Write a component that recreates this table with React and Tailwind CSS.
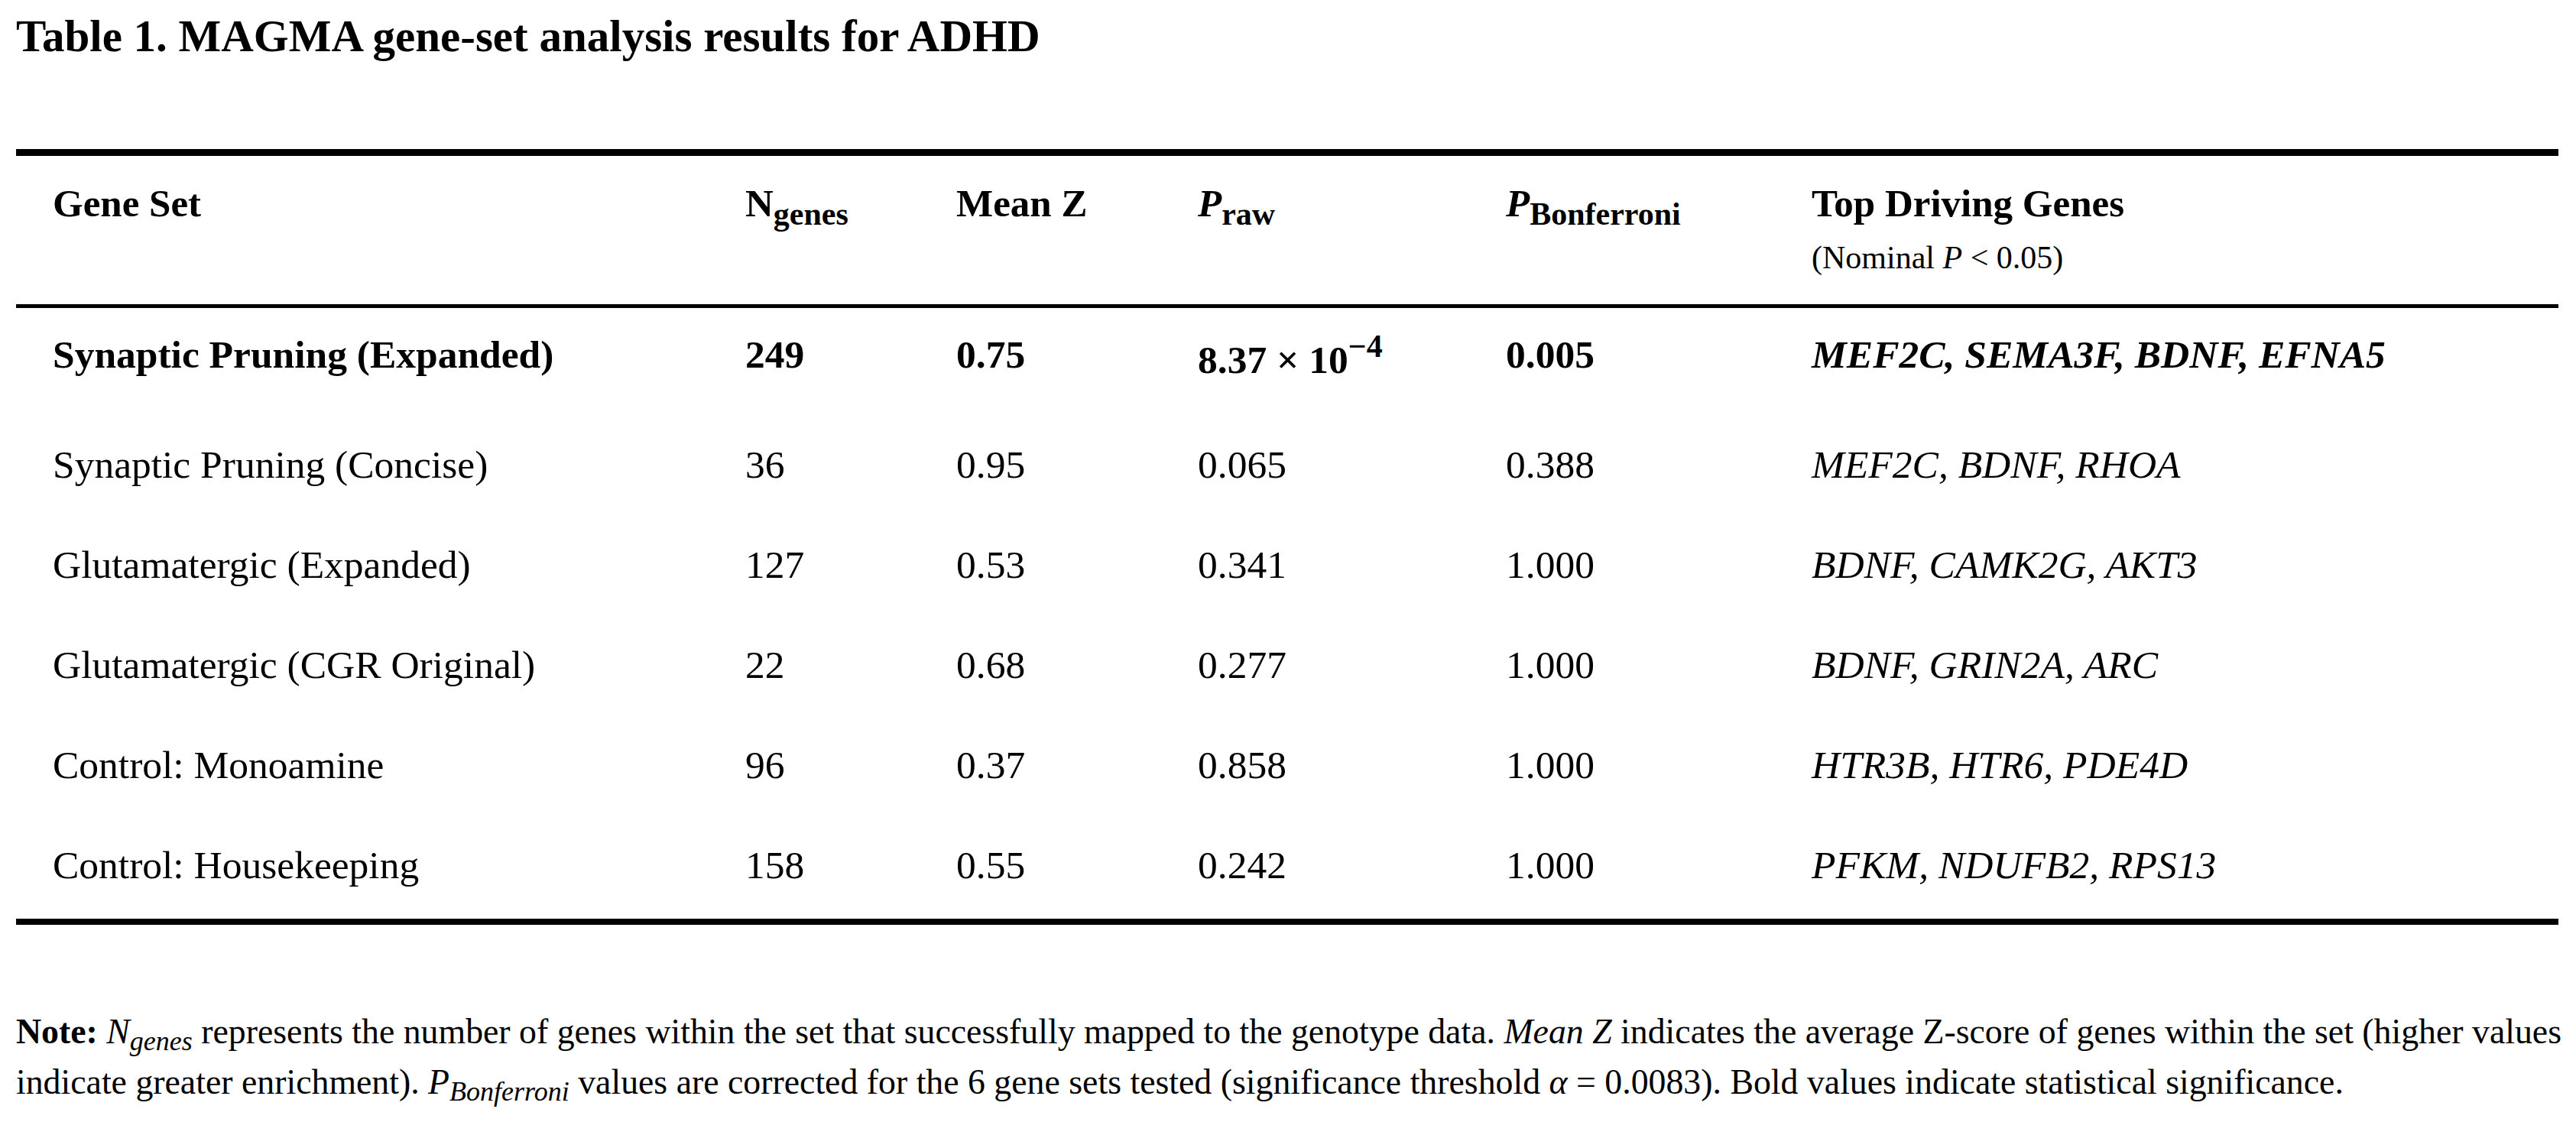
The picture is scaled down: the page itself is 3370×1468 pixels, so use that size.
import React from "react";

const rows = [
  { name: "Synaptic Pruning (Expanded)", n: "249", z: "0.75", p: null, pb: "0.005", genes: "MEF2C, SEMA3F, BDNF, EFNA5", bold: true },
  { name: "Synaptic Pruning (Concise)", n: "36", z: "0.95", p: "0.065", pb: "0.388", genes: "MEF2C, BDNF, RHOA" },
  { name: "Glutamatergic (Expanded)", n: "127", z: "0.53", p: "0.341", pb: "1.000", genes: "BDNF, CAMK2G, AKT3" },
  { name: "Glutamatergic (CGR Original)", n: "22", z: "0.68", p: "0.277", pb: "1.000", genes: "BDNF, GRIN2A, ARC" },
  { name: "Control: Monoamine", n: "96", z: "0.37", p: "0.858", pb: "1.000", genes: "HTR3B, HTR6, PDE4D" },
  { name: "Control: Housekeeping", n: "158", z: "0.55", p: "0.242", pb: "1.000", genes: "PFKM, NDUFB2, RPS13" },
];

function Row({ r }) {
  return (
    <div
      className={
        "grid grid-cols-[906px_276px_316px_403px_400px_1fr] pl-[48px] pt-[31px] text-[51.5px] leading-[60px] " +
        (r.bold ? "h-[144px] font-bold" : "h-[131px]")
      }
    >
      <div>{r.name}</div>
      <div>{r.n}</div>
      <div>{r.z}</div>
      <div className={r.p ? "" : "mt-[7px]"}>
        {r.p ? (
          r.p
        ) : (
          <span>
            8.37 × 10<sup className="text-[42px]">−4</sup>
          </span>
        )}
      </div>
      <div>{r.pb}</div>
      <div className="italic">{r.genes}</div>
    </div>
  );
}

export default function App() {
  return (
    <div className="min-h-screen w-[3370px] bg-white px-[21px] pt-[12px] text-black font-['Liberation_Serif','Times_New_Roman',serif]">
      <h1 className="text-[59px] font-bold leading-[70px]">
        Table 1. MAGMA gene-set analysis results for ADHD
      </h1>

      <div className="mt-[113px] w-[3326px] border-t-[9px] border-b-[8px] border-black">
        <div className="grid grid-cols-[906px_276px_316px_403px_400px_1fr] border-b-[5px] border-black pl-[48px] pt-[32px] pb-[36px] text-[51px] font-bold leading-[60px]">
          <div>Gene Set</div>
          <div>
            N<sub className="text-[42px]">genes</sub>
          </div>
          <div>Mean Z</div>
          <div>
            <span className="italic">P</span>
            <sub className="text-[42px]">raw</sub>
          </div>
          <div>
            <span className="italic">P</span>
            <sub className="text-[42px]">Bonferroni</sub>
          </div>
          <div>
            <div>Top Driving Genes</div>
            <div className="mt-[16px] text-[42px] font-normal leading-[50px]">
              (Nominal <span className="italic">P</span> &lt; 0.05)
            </div>
          </div>
        </div>
        {rows.map((r) => (
          <Row key={r.name} r={r} />
        ))}
      </div>

      <div className="mt-[107px] text-[45.8px] leading-[66px]">
        <div className="whitespace-nowrap">
          <span className="font-bold">Note:</span> <span className="italic">N</span>
          <sub className="text-[36px] italic">genes</sub> represents the number of genes within the set that
          successfully mapped to the genotype data. <span className="italic">Mean Z</span> indicates the average
          Z-score of genes within the set (higher values
        </div>
        <div className="whitespace-nowrap">
          indicate greater enrichment). <span className="italic">P</span>
          <sub className="text-[36px] italic">Bonferroni</sub> values are corrected for the 6 gene sets tested
          (significance threshold <span className="italic">α</span> = 0.0083). Bold values indicate statistical
          significance.
        </div>
      </div>
    </div>
  );
}
